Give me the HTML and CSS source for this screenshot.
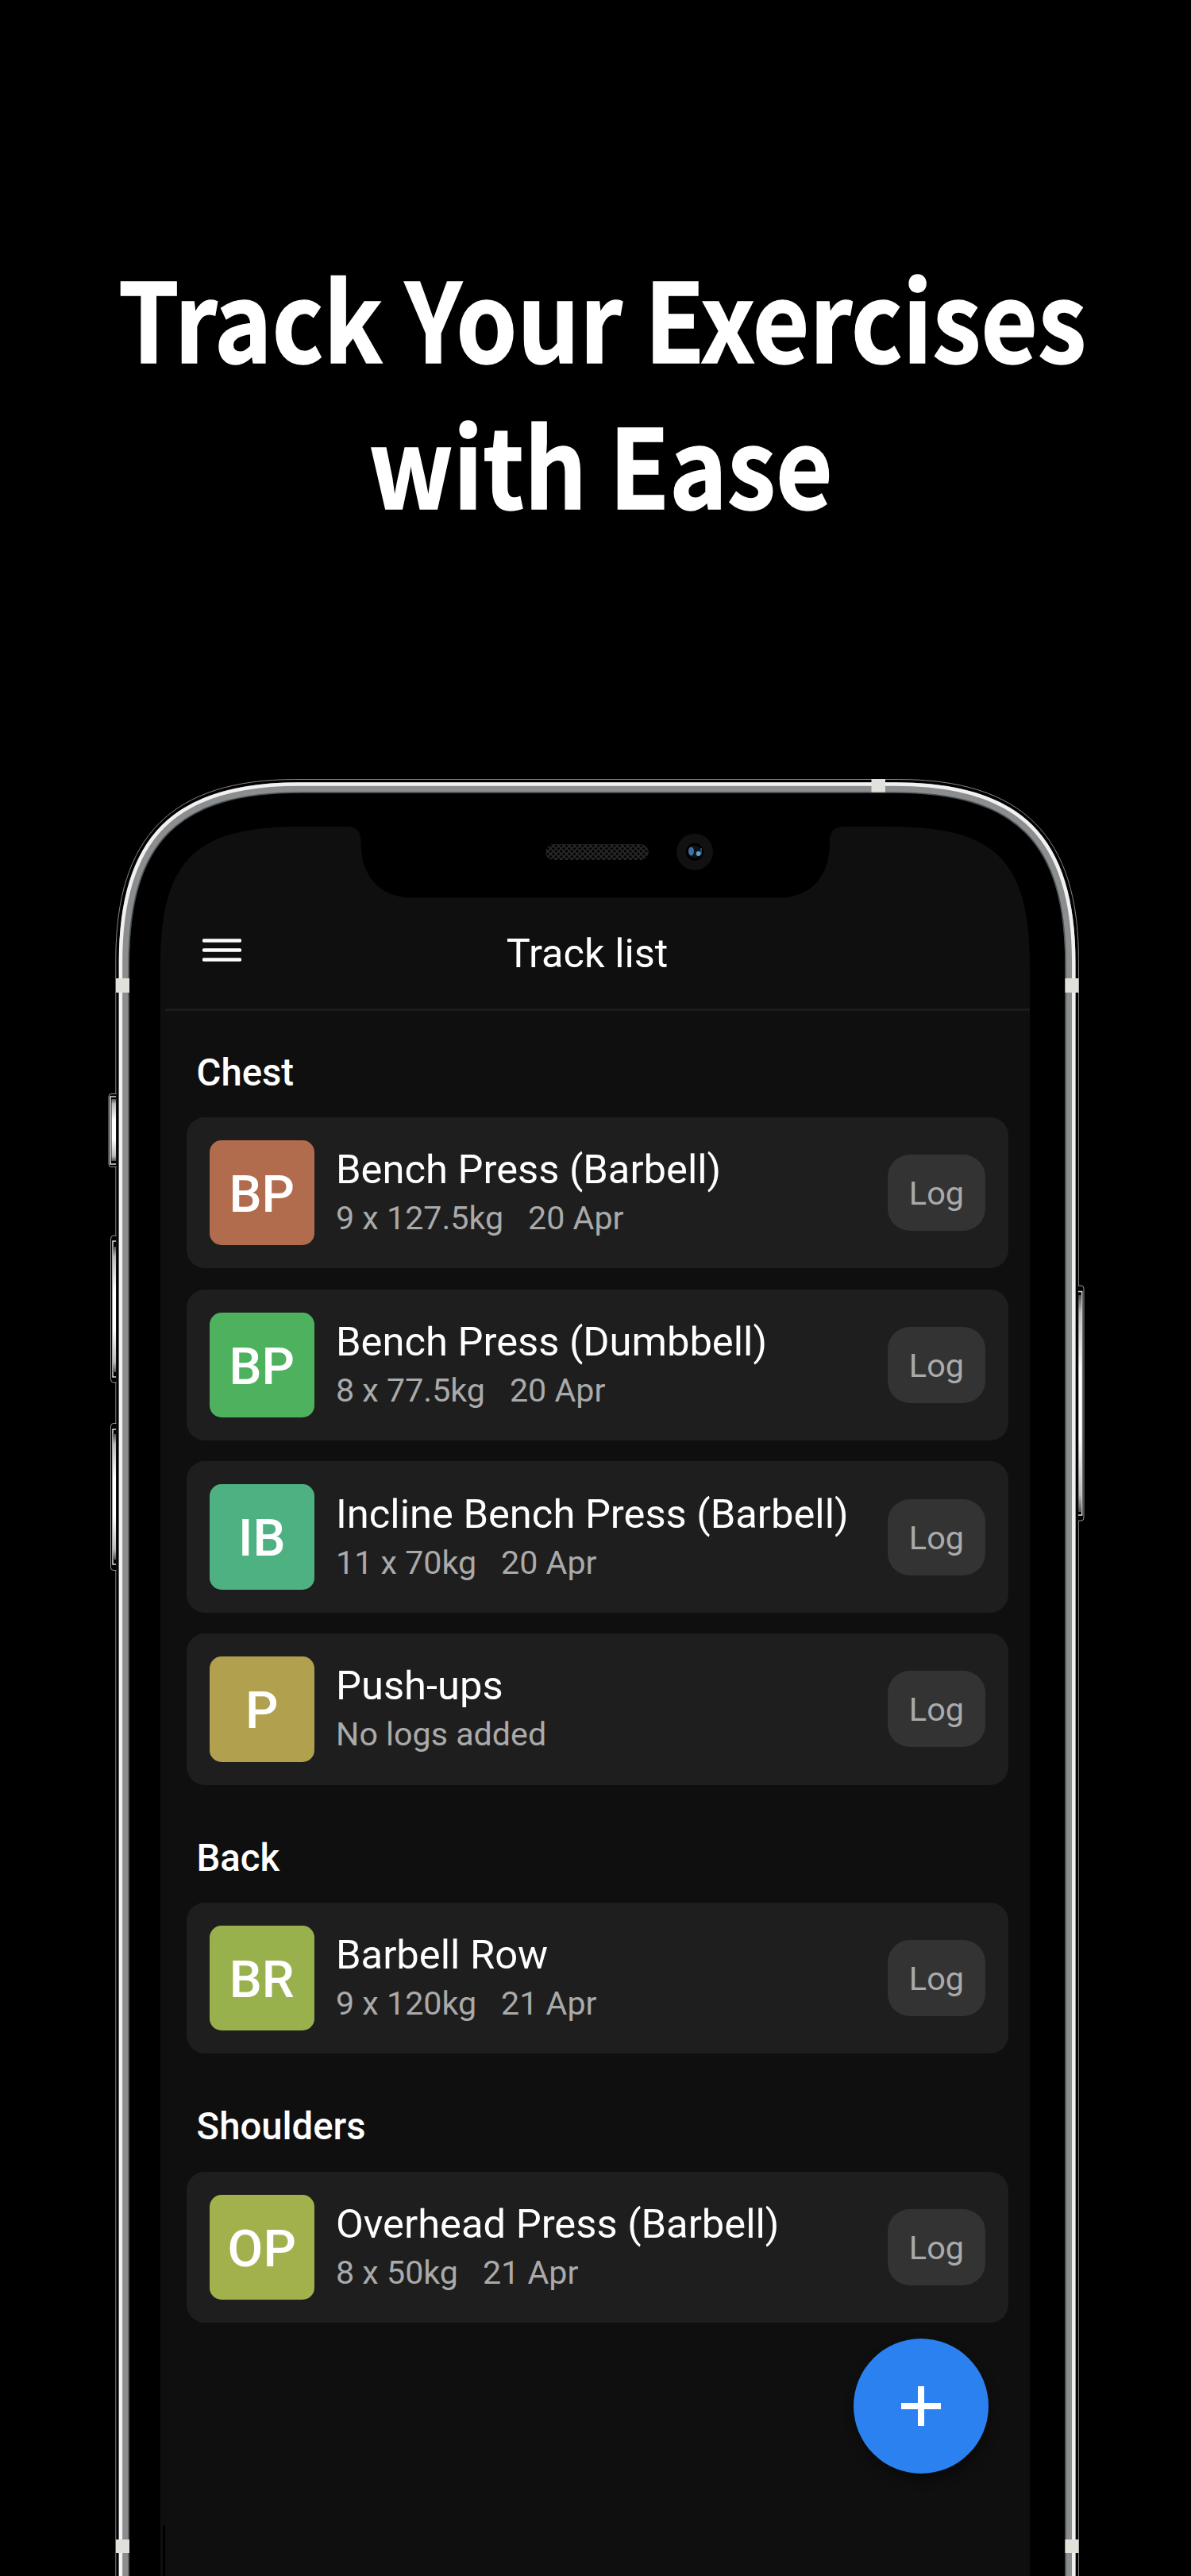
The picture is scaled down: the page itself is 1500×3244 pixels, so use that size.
FILE: index.html
```html
<!DOCTYPE html>
<html lang="en">
<head>
<meta charset="utf-8">
<title>Track Your Exercises with Ease</title>
<link rel="stylesheet" href="styles.css">
</head>
<body>
<main class="poster">
  <h1 class="headline"><span class="line line-one">Track Your Exercises</span><span class="line line-two">with Ease</span></h1>

  <section class="phone">
    <svg class="frame" viewBox="0 960 1500 2284" aria-hidden="true">
      <defs>
        <linearGradient id="key" x1="0" y1="0" x2="0" y2="1">
          <stop offset="0" stop-color="#555"/><stop offset=".08" stop-color="#bbb"/><stop offset=".35" stop-color="#fff"/><stop offset=".65" stop-color="#fff"/><stop offset=".92" stop-color="#bbb"/><stop offset="1" stop-color="#555"/>
        </linearGradient>
        <pattern id="mesh" width="6.7" height="6.7" patternUnits="userSpaceOnUse">
          <path d="M0 0L6.7 6.7M6.7 0L0 6.7" stroke="#2b2b2b" stroke-width="1.6"/>
        </pattern>
      </defs>

      <path d="M202 3244V1216C202 1084 245 1041 377 1041H438Q454.500 1041 454.500 1060C454.500 1106 480 1130.500 520 1130.500H980C1020 1130.500 1045 1106 1045 1060Q1045 1041 1062 1041H1122C1254 1041 1297 1084 1297 1216V3244Z" fill="#0f0f0f"/>
      <path d="M206.500 3180V3244" stroke="#000" stroke-width="3"/>
      <g fill="none">
        <path d="M156.300 3250V1212.800C156.300 1056.800 221.300 991.800 377.300 991.800H1126.900C1282.900 991.800 1347.900 1056.800 1347.900 1212.800V3250" stroke="#8b8d8e" stroke-width="13"/>
        <path d="M151.900 3250V1211.500C151.900 1055.200 219.600 987.500 375.900 987.500H1128.300C1284.600 987.500 1352.300 1055.200 1352.300 1211.500V3250" stroke="#f0f1f0" stroke-width="4.500"/>
        <path d="M162.200 3250V1215.500C162.200 1060 224.200 998 379.700 998H1124.500C1280 998 1342 1060 1342 1215.500V3250" stroke="#4b5256" stroke-width="1.600"/>
        <path d="M145.800 3250V1208.500C145.800 1052.500 216.800 981.500 372.800 981.500H1131.400C1287.400 981.500 1358.400 1052.500 1358.400 1208.500V3250" stroke="#858585" stroke-width="1"/>
      </g>
      <g fill="#dfe1da">
        <rect x="146" y="1232" width="17" height="18"/><rect x="1341.500" y="1232" width="17" height="18"/>
        <rect x="1097.500" y="981" width="17.500" height="16.500"/>
        <rect x="146" y="3198" width="17" height="17"/><rect x="1341.500" y="3198" width="17" height="17"/>
      </g>
      <g fill="#000" stroke="#999" stroke-width="1">
        <path d="M146.500 1377.500H140Q137 1377.500 137 1381V1466Q137 1469.500 140 1469.500H146.500"/>
        <path d="M146.500 1556H143Q139.500 1556 139.500 1560V1737Q139.500 1741 143 1741H146.500"/>
        <path d="M146.500 1792.500H143Q139.500 1792.500 139.500 1796V1974Q139.500 1977.500 143 1977.500H146.500"/>
        <path d="M1358 1619H1362Q1365 1619 1365 1623V1911Q1365 1915 1362 1915H1358"/>
      </g>
      <g fill="none" stroke="#ddd" stroke-width="1.500">
        <path d="M146 1381H139V1466H146M146 1563H142V1734H146M146 1800H142V1970H146M1358 1626.500H1362.700V1908H1358"/>
      </g>
      <g fill="url(#key)">
        <rect x="140.500" y="1384" width="5.500" height="78"/><rect x="142" y="1570" width="4" height="158"/>
        <rect x="142" y="1806" width="4" height="158"/><rect x="1358.300" y="1631" width="4" height="273"/>
      </g>
      <rect x="687" y="1063" width="130" height="20" rx="10" fill="url(#mesh)"/>
      <circle cx="875" cy="1072.700" r="23" fill="#111"/>
      <circle cx="875" cy="1072.700" r="11" fill="#000"/>
      <circle cx="875" cy="1072.700" r="8" fill="#0b1218"/>
      <ellipse cx="870.500" cy="1072" rx="3.500" ry="5.500" fill="#3f6f9f"/>
      <circle cx="879.700" cy="1075" r="3" fill="#56a3c9"/>
      <path d="M883 1068V1076" stroke="#305f8c" stroke-width="1.500"/>
    </svg>

    <div class="screen">
      <header class="topbar">
        <svg class="menu" viewBox="0 0 49 29"><path d="M2 2.500H47M2 14.500H47M2 26.500H47" stroke="#fff" stroke-width="4.600" stroke-linecap="round"/></svg>
        <h2 class="title">Track list</h2>
      </header>

      <section class="group">
        <h3 class="group-name">Chest</h3>
        <article class="card"><div class="avatar clay">BP</div><div class="info"><div class="name">Bench Press (Barbell)</div><div class="last"><span>9 x 127.5kg</span><span>20 Apr</span></div></div><button class="log">Log</button></article>
        <article class="card"><div class="avatar green">BP</div><div class="info"><div class="name">Bench Press (Dumbbell)</div><div class="last"><span>8 x 77.5kg</span><span>20 Apr</span></div></div><button class="log">Log</button></article>
        <article class="card"><div class="avatar teal">IB</div><div class="info"><div class="name">Incline Bench Press (Barbell)</div><div class="last"><span>11 x 70kg</span><span>20 Apr</span></div></div><button class="log">Log</button></article>
        <article class="card"><div class="avatar gold">P</div><div class="info"><div class="name">Push-ups</div><div class="last"><span>No logs added</span></div></div><button class="log">Log</button></article>
      </section>
      <section class="group">
        <h3 class="group-name">Back</h3>
        <article class="card"><div class="avatar lime">BR</div><div class="info"><div class="name">Barbell Row</div><div class="last"><span>9 x 120kg</span><span>21 Apr</span></div></div><button class="log">Log</button></article>
      </section>
      <section class="group">
        <h3 class="group-name">Shoulders</h3>
        <article class="card"><div class="avatar olive">OP</div><div class="info"><div class="name">Overhead Press (Barbell)</div><div class="last"><span>8 x 50kg</span><span>21 Apr</span></div></div><button class="log">Log</button></article>
      </section>

      <button class="add" aria-label="Add exercise"><svg viewBox="0 0 50 50"><path d="M25 0V50M0 25H50" stroke="#fff" stroke-width="8"/></svg></button>
    </div>
  </section>
</main>
</body>
</html>
```
FILE: styles.css
```css
* { box-sizing: border-box; margin: 0; padding: 0; }
body { background: #000; }
.poster {
  width: 1500px;
  height: 3244px;
  overflow: hidden;
  background: #000;
  color: #fff;
  font-family: Roboto, "Liberation Sans", sans-serif;
}
.headline {
  height: 960px;
  padding-top: 305px;
  display: flex;
  flex-direction: column;
  align-items: center;
  font: 700 137px/184px "Noto Sans CJK SC", "Open Sans", sans-serif;
  white-space: nowrap;
}
.line { transform: scaleX(.9); -webkit-text-stroke: 1.500px #fff; }
.line-one { margin-left: 16px; }
.line-two { margin-left: 12px; }
.phone { position: relative; height: 2284px; }
.frame { position: absolute; inset: 0; width: 1500px; height: 2284px; }
.screen {
  position: relative;
  width: 1095px;
  height: 2203px;
  margin-left: 202px;
  top: 81px;
}
.topbar {
  height: 232px;
  margin-left: 6px;
  padding: 0 47px;
  display: grid;
  grid-template-columns: 1fr auto 1fr;
  border-bottom: 3px solid #1b1b1b;
}
.menu { width: 49px; height: 29px; margin-top: 141px; }
.title { margin: 128px 26px 0 0; font-weight: 400; font-size: 50.500px; line-height: 64px; }
.group { display: flex; flex-direction: column; gap: 26.300px; padding: 0 27px 0 32.500px; }
.group + .group { margin-top: 51px; }
.group-name {
  padding: 13px 13px 0;
  height: 71px;
  font-weight: 500;
  font-size: 47.300px;
  line-height: 56px;
}
.topbar + .group { padding-top: 36.500px; }
.card {
  height: 190.500px;
  display: flex;
  align-items: center;
  padding: 0 29px;
  border-radius: 23px;
  background: #1e1e1e;
}
.avatar {
  width: 132.500px;
  height: 132.500px;
  border-radius: 15px;
  font-weight: 500;
  font-size: 65px;
  line-height: 137px;
  text-align: center;
}
.clay { background: #b16c4d; }
.green { background: #4db15d; }
.teal { background: #4eb182; }
.gold { background: #b1a04d; }
.lime { background: #98b14d; }
.olive { background: #a3b14d; }
.info { flex: 1; padding: 2px 0 0 27px; white-space: nowrap; }
.name { font-size: 50.700px; line-height: 62px; }
.last { display: flex; gap: 31px; color: #aaa; font-size: 41.200px; line-height: 60px; }
.log {
  width: 123px;
  height: 96px;
  border: 0;
  border-radius: 28px;
  background: #333;
  color: #aaa;
  font: 400 41.500px/98px Roboto, sans-serif;
}
.add {
  position: absolute;
  left: 873px;
  top: 1903.500px;
  width: 170px;
  height: 170px;
  display: grid;
  place-items: center;
  border: 0;
  border-radius: 50%;
  background: #2b81f0;
  box-shadow: 2px 8px 14px rgba(0, 0, 0, .4);
}
.add svg { width: 50px; height: 50px; }
```
